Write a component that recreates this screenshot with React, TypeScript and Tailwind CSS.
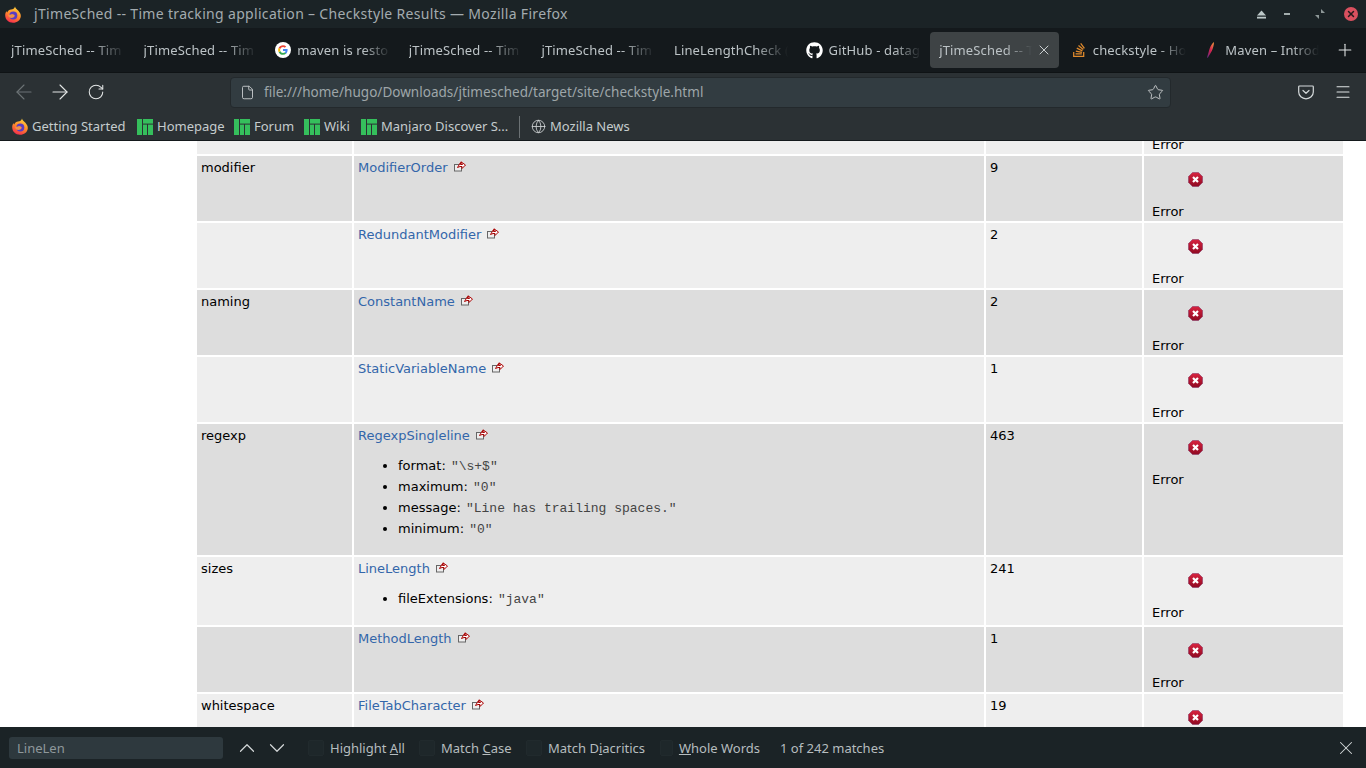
import { ArrowLeft, ArrowRight, ChevronDown, ChevronUp, File, Globe, Menu, Plus, RotateCw, Star, X } from "lucide-react";
import { FaGithub, FaStackOverflow } from "react-icons/fa";

const Firefox = () => (
  <svg width="16" height="17" viewBox="0 0 16 17">
    <defs>
      <linearGradient id="ff" x1="0.7" y1="0" x2="0.3" y2="1">
        <stop offset="0" stopColor="#ffd33d" />
        <stop offset="0.5" stopColor="#ff8a2b" />
        <stop offset="1" stopColor="#f5284f" />
      </linearGradient>
    </defs>
    <path d="M10 0.5c0.3 2 2 2.6 3.4 4.3C15 6.700 16 8.500 15.800 10.500 15.400 14.300 12.100 16.800 8 16.800 3.500 16.800 0.200 13.400 0.200 9.300c0-1.800 0.500-3.300 1.300-4.400 0 0.800 0.300 1.300 0.700 1.600C3 4.500 4.500 3.800 6 3.600 8 3.300 9.600 2.500 10 0.500z" fill="url(#ff)" />
    <circle cx="8.300" cy="9.500" r="4" fill="#5a3cc4" />
    <path d="M3.300 8.500c1.500 0.300 2.600 0.100 3.700-0.500 1.300 0.600 2.500 0.300 2.800 1.800C9 12 6 12.500 4.500 11.500 3.700 10.800 3.300 9.700 3.300 8.500z" fill="#ff9a3c" opacity="0.9" />
  </svg>
);

const Manjaro = () => (
  <svg width="16" height="16" viewBox="0 0 16 16" fill="#35bf5c">
    <rect x="0" y="0" width="5" height="16" />
    <rect x="6" y="0" width="10" height="4.600" />
    <rect x="6" y="5.600" width="4" height="10.400" />
    <rect x="11" y="5.600" width="5" height="10.400" />
  </svg>
);

const GoogleIcon = () => (
  <svg width="16" height="16" viewBox="0 0 16 16">
    <circle cx="8" cy="8" r="8" fill="#fff" />
    <path d="M12.600 8.100c0-.4 0-.7-.1-1H8v1.900h2.600c-.1.600-.5 1.200-1 1.500l1.600 1.200c.9-.9 1.400-2.100 1.400-3.600z" fill="#4285f4" />
    <path d="M8 12.800c1.300 0 2.400-.4 3.200-1.200L9.600 10.400c-.4.300-1 .5-1.600.5-1.200 0-2.300-.8-2.700-2l-1.600 1.300c.8 1.600 2.400 2.600 4.300 2.600z" fill="#34a853" />
    <path d="M5.300 8.900c-.2-.6-.2-1.200 0-1.800L3.700 5.800c-.7 1.300-.7 3 0 4.400l1.600-1.300z" fill="#fbbc05" />
    <path d="M8 5.100c.7 0 1.300.2 1.800.7l1.400-1.400C10.400 3.600 9.300 3.200 8 3.200c-1.900 0-3.500 1-4.300 2.600l1.600 1.300c.4-1.200 1.500-2 2.700-2z" fill="#ea4335" />
  </svg>
);

const Feather = () => (
  <svg width="16" height="16" viewBox="0 0 16 16">
    <defs>
      <linearGradient id="mv" x1="1" y1="0" x2="0" y2="1">
        <stop offset="0" stopColor="#f6a03c" />
        <stop offset="0.5" stopColor="#d6234f" />
        <stop offset="1" stopColor="#5a2a86" />
      </linearGradient>
    </defs>
    <path d="M11 0C9 1.500 7.500 4 6.500 7 5.800 9.500 5 12.500 4 15.500l.8.300C6 13.500 7.500 11.500 8.500 9.500 10 6.500 11 3 11 0z" fill="url(#mv)" />
  </svg>
);

const PocketIcon = () => (
  <svg width="16" height="16" viewBox="0 0 16 16" fill="none" stroke="#d5dadb" strokeWidth="1.200" strokeLinecap="round" strokeLinejoin="round">
    <path d="M1.500 2h13a.8.8 0 0 1 .8.800V8a7.300 6.800 0 0 1-14.600 0V2.800a.8.8 0 0 1 .8-.8z" />
    <path d="M5 6.500l3 2.800 3-2.800" />
  </svg>
);

const ExternalIcon = () => (
  <svg width="12" height="11" viewBox="0 0 12 11" className="ml-[6px] mt-[-4px] inline-block">
    <rect x="0.500" y="3.500" width="7" height="6.500" fill="#eee" stroke="#666" />
    <path d="M3.500 6.500L6.500 1.500V3.500H8.500L7 .8 11.500 4 8 7.500V5.500H6z" fill="#fff" stroke="#a00" strokeWidth="1" strokeLinejoin="round" />
  </svg>
);

const ErrorIcon = () => (
  <svg width="15" height="15" viewBox="0 0 15 15" className="block">
    <defs>
      <linearGradient id="er" x1="0" y1="0" x2="0" y2="1">
        <stop offset="0" stopColor="#d8233f" />
        <stop offset="1" stopColor="#8f0a22" />
      </linearGradient>
    </defs>
    <path d="M4.500 0.500h6l4 4v6l-4 4h-6l-4-4v-6z" fill="url(#er)" stroke="#8a3a66" strokeWidth="0.600" />
    <path d="M5 5l5 5M10 5l-5 5" stroke="#fff" strokeWidth="2.200" />
  </svg>
);

const tabs: { title: string; icon?: React.ReactNode; active?: boolean }[] = [
  { title: "jTimeSched -- Tim" },
  { title: "jTimeSched -- Tim" },
  { title: "maven is resto", icon: <GoogleIcon /> },
  { title: "jTimeSched -- Tim" },
  { title: "jTimeSched -- Tim" },
  { title: "LineLengthCheck (" },
  { title: "GitHub - datag", icon: <FaGithub size={17} className="text-white" /> },
  { title: "jTimeSched -- T", active: true },
  { title: "checkstyle - Ho", icon: <FaStackOverflow size={16} className="text-[#e08a2c]" /> },
  { title: "Maven – Introd", icon: <Feather /> },
];

const bookmarks = [
  { label: "Getting Started", w: "w-[125px]", icon: <Firefox /> },
  { label: "Homepage", w: "w-[97px]", icon: <Manjaro /> },
  { label: "Forum", w: "w-[70px]", icon: <Manjaro /> },
  { label: "Wiki", w: "w-[57px]", icon: <Manjaro /> },
  { label: "Manjaro Discover S...", w: "w-[152px]", icon: <Manjaro /> },
];

type Row = {
  group?: string;
  rule: string;
  props?: [string, string][];
  count: string;
  h: string;
};

const rows: Row[] = [
  { group: "modifier", rule: "ModifierOrder", count: "9", h: "h-[65px]" },
  { rule: "RedundantModifier", count: "2", h: "h-[65px]" },
  { group: "naming", rule: "ConstantName", count: "2", h: "h-[65px]" },
  { rule: "StaticVariableName", count: "1", h: "h-[65px]" },
  {
    group: "regexp",
    rule: "RegexpSingleline",
    count: "463",
    h: "h-[131px]",
    props: [
      ["format", '"\\s+$"'],
      ["maximum", '"0"'],
      ["message", '"Line has trailing spaces."'],
      ["minimum", '"0"'],
    ],
  },
  { group: "sizes", rule: "LineLength", count: "241", h: "h-[68px]", props: [["fileExtensions", '"java"']] },
  { rule: "MethodLength", count: "1", h: "h-[65px]" },
  { group: "whitespace", rule: "FileTabCharacter", count: "19", h: "h-[65px]" },
];

const findOptions = [
  { w: "w-[111px]", label: <>Highlight <u>A</u>ll</> },
  { w: "w-[107px]", label: <>Match <u>C</u>ase</> },
  { w: "w-[134px]", label: <>Match D<u>i</u>acritics</> },
  { w: "w-[100px]", label: <><u>W</u>hole Words</> },
];

export default function App() {
  return (
    <div className="w-[1366px] h-[768px] flex flex-col overflow-hidden bg-white font-['Noto_Sans',sans-serif]">
      {/* title bar */}
      <div className="h-[28px] shrink-0 bg-[#1b2326] flex items-center pl-[5px] text-[14px] text-[#a3abaf]">
        <Firefox />
        <span className="ml-[13px] pb-[1px] tracking-[0.32px]">jTimeSched -- Time tracking application – Checkstyle Results — Mozilla Firefox</span>
        <div className="ml-auto flex items-center text-[#c5d0d0]">
          <svg width="9" height="9" viewBox="0 0 10 9" fill="#bcc8c8" className="mr-[18px]">
            <path d="M5 0l5 5.500H0z" />
            <rect x="0" y="7" width="10" height="2" />
          </svg>
          <div className="w-[6px] h-[2px] bg-[#a3adad] mr-[25px]" />
          <svg width="10" height="10" viewBox="0 0 10 10" fill="#8d9797" className="mr-[19px]">
            <path d="M6 0v4h4zM4 10V6H0z" />
          </svg>
          <div className="w-[14px] h-[14px] rounded-full bg-[#d9505f] mr-[8px] flex items-center justify-center">
            <X size={10} strokeWidth={3.5} className="text-[#231a1c]" />
          </div>
        </div>
      </div>

      {/* tabs */}
      <div className="h-[44px] shrink-0 bg-[#14191c] flex items-center text-[13px] text-[#bcc3c6]">
        {tabs.map((t, i) => (
          <div key={i} className="w-[132.6px] h-[36px] px-[2px] shrink-0">
            <div className={`h-full rounded-[4px] pl-[9px] flex items-center ${t.active ? "bg-[#3e4345] pr-[6px] gap-0" : "pr-[1px] gap-[6px]"}`}>
              {t.icon && <span className="shrink-0 ml-[-1px]">{t.icon}</span>}
              <span className="flex-1 pt-[2px] tracking-[0.15px] whitespace-nowrap overflow-hidden [mask-image:linear-gradient(to_right,black_68%,transparent_96%)]">{t.title}</span>
              {t.active && <X size={16} strokeWidth={1.4} className="shrink-0 text-[#d5d9da] mr-[1px]" />}
            </div>
          </div>
        ))}
        <Plus size={20} strokeWidth={1.3} className="ml-[9px] text-[#e2e6e6]" />
      </div>

      {/* nav toolbar */}
      <div className="h-[69px] shrink-0 bg-[#2b3134] border-t border-[#0f1315] border-b border-b-[#14191c] flex flex-col">
        <div className="h-[38px] shrink-0 flex items-center">
          <ArrowLeft size={24} strokeWidth={1.1} className="ml-[12px] text-[#6c7376]" />
          <ArrowRight size={24} strokeWidth={1.1} className="ml-[12px] text-[#e3e6e6]" />
          <RotateCw size={18} strokeWidth={1.4} className="ml-[15px] text-[#e3e6e6]" />
          <div className="ml-[125px] w-[941px] h-[31px] rounded-[4px] bg-[#323c41] border border-[#23292c] flex items-center text-[13.500px] text-[#9ea6a9]">
            <File size={15} strokeWidth={1.5} className="ml-[9px] text-[#c3c8ca]" />
            <span className="ml-[9px] pt-[1px] tracking-[0.03px]">file:///home/hugo/Downloads/jtimesched/target/site/checkstyle.html</span>
            <Star size={17} strokeWidth={1.3} className="ml-auto mr-[6px] text-[#c8cccd]" />
          </div>
          <div className="ml-[127px] shrink-0"><PocketIcon /></div>
          <Menu size={18} strokeWidth={1.4} className="ml-[20px] text-[#dfe3e3]" />
        </div>
        <div className="flex-1 flex items-center pl-[12px] pt-[2px] text-[13px] text-[#c5cccd]">
          {bookmarks.map((b) => (
            <div key={b.label} className={`flex items-center gap-[4px] shrink-0 ${b.w}`}>
              {b.icon}
              <span className="whitespace-nowrap">{b.label}</span>
            </div>
          ))}
          <div className="w-px h-[22px] bg-[#6b7174] ml-[6px]" />
          <Globe size={15} strokeWidth={1.3} className="ml-[11px] text-[#d5d9da]" />
          <span className="ml-[4px]">Mozilla News</span>
        </div>
      </div>

      {/* page */}
      <main className="flex-1 min-h-0 overflow-hidden pl-[197px] pr-[23px] flex flex-col gap-[2px] text-[13px] leading-[15px] text-black font-['DejaVu_Sans',sans-serif]">
        <div className="grid grid-cols-[155px_630px_156px_199px] gap-[2px] h-[13px] shrink-0">
          <div className="bg-[#eee]" />
          <div className="bg-[#eee]" />
          <div className="bg-[#eee]" />
          <div className="bg-[#eee] flex flex-col justify-end pl-[8px] pb-[2px] overflow-hidden">
            <span>Error</span>
          </div>
        </div>
        {rows.map((r, i) => {
          const bg = i % 2 ? "bg-[#eee]" : "bg-[#ddd]";
          return (
            <div key={r.rule} className={`grid grid-cols-[155px_630px_156px_199px] gap-[2px] shrink-0 ${r.h}`}>
              <div className={`px-[4px] pt-[4px] ${bg}`}>{r.group}</div>
              <div className={`px-[4px] pt-[4px] ${bg}`}>
                <a className="text-[#36a]">{r.rule}</a>
                <ExternalIcon />
                {r.props && (
                  <ul className="mt-[12px] ml-[40px] list-disc">
                    {r.props.map(([k, v]) => (
                      <li key={k} className="h-[21px] leading-[21px]">
                        {k}: <span className="ml-[1px] leading-none font-['Liberation_Mono',monospace] text-[#444]">{v}</span>
                      </li>
                    ))}
                  </ul>
                )}
              </div>
              <div className={`px-[4px] pt-[4px] ${bg}`}>{r.count}</div>
              <div className={`pl-[8px] pt-[3px] ${bg}`}>
                <div className="ml-[36px] mt-[13px] mb-[17px]"><ErrorIcon /></div>
                <span>Error</span>
              </div>
            </div>
          );
        })}
      </main>

      {/* find bar */}
      <div className="h-[41px] shrink-0 bg-[#1b2326] flex items-center text-[13px] text-[#b6bdbf]">
        <div className="ml-[9px] w-[214px] h-[22px] rounded-[3px] bg-[#2e393e] pl-[8px] pt-[2px] flex items-center text-[#8f989b]">LineLen</div>
        <ChevronUp size={26} strokeWidth={1.1} className="ml-[11px] text-[#d5d9da]" />
        <ChevronDown size={26} strokeWidth={1.1} className="ml-[4px] text-[#d5d9da]" />
        <div className="ml-[18px] flex items-center">
          {findOptions.map((o, i) => (
            <div key={i} className={`flex items-center shrink-0 ${o.w}`}>
              <div className="w-[16px] h-[16px] rounded-[2px] bg-[#1e272a] border border-[#212a2d] mr-[6px]" />
              <span className="pt-[2px] whitespace-nowrap">{o.label}</span>
            </div>
          ))}
        </div>
        <span className="ml-[20px] pt-[2px]">1 of 242 matches</span>
        <X size={22} strokeWidth={1.1} className="ml-auto mr-[9px] text-[#d5d9da]" />
      </div>
    </div>
  );
}
